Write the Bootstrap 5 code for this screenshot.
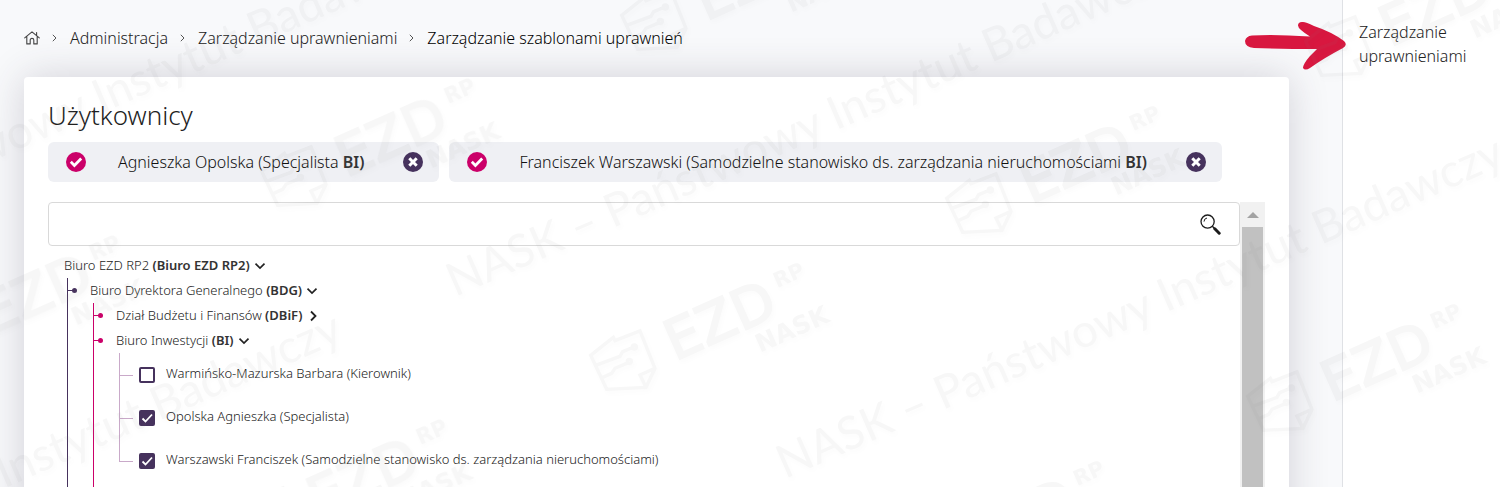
<!DOCTYPE html>
<html lang="pl">
<head>
<meta charset="utf-8">
<meta name="viewport" content="width=device-width, initial-scale=1">
<title>Zarządzanie szablonami uprawnień</title>
<link href="https://cdn.jsdelivr.net/npm/bootstrap@5.3.0/dist/css/bootstrap.min.css" rel="stylesheet">
<style>
  :root { --violet: #46325d; --pink: #cb0069; --lilac: #c9a9c9; }
  body { font-family: "Noto Sans", sans-serif; font-size: 16px; font-weight: 300; line-height: 24px; color: #1f1f1f; background: #f8f9fb; }
  a, a:hover { color: inherit; text-decoration: none; }
  svg { display: block; flex: none; }

  .page-main { padding: 26px 53px 0 24px; min-width: 0; }
  .crumbs { gap: 12px; margin-bottom: 27px; color: #222; }
  .crumbs li { gap: 13px; }
  .crumbs .current { color: #000; }

  .panel { background: #fff; border-radius: 4px; padding: 24px; box-shadow: 0 0 40px rgba(60, 50, 75, .2); }
  .panel-title { font-size: 26px; line-height: 28px; font-weight: 300; margin-bottom: 13px; }

  .person-chips { gap: 10px; margin-bottom: 20px; }
  .person-chip { height: 40px; padding: 0 16px 0 18px; border-radius: 6px; background: #eff0f4; color: #111; }
  .person-chip .who { margin: 0 39px 0 32px; }
  .person-chip b, .tree b { font-weight: 600; color: #333; }
  .bare { border: 0; padding: 0; background: none; color: inherit; }

  .search-box { height: 44px; border: 1px solid #d9d9d9; border-radius: 4px; padding-right: 18px; margin-bottom: 7px; }
  .search-box input { border: 0; background: none; box-shadow: none !important; }

  .scroll-rail { width: 25px; padding: 0 2px; background: #f1f1f1; }
  .rail-up { height: 25px; }
  .rail-thumb { background: #c1c1c1; }

  .tree, .tree ul { list-style: none; margin: 0; padding: 0; }
  .tree { margin-left: 16px; font-size: 13px; color: #222; }
  .tree-row { height: 25px; gap: 4px; }
  .tree-row span { padding-bottom: 2px; }
  .tree .level { margin-left: 3px; padding-bottom: 24px; border-left: 1px solid #46325d; }
  .tree .level .level { border-left-color: #cb0069; }
  .tree .level > li { position: relative; padding-left: 22px; }
  .tree .level > li::before { content: ""; position: absolute; left: 0; top: 12px; width: 6px; height: 1px; background: var(--violet); }
  .tree .level > li::after { content: ""; position: absolute; left: 4px; top: 10px; width: 5px; height: 5px; border-radius: 50%; background: var(--violet); }
  .tree .level .level > li::before, .tree .level .level > li::after { background: var(--pink); }
  .tree .people { margin-left: 3px; }
  .tree .people li { position: relative; height: 43px; padding-left: 20px; }
  .tree .people li::before { content: ""; position: absolute; left: 0; top: 0; width: 14px; height: 23px; border: solid var(--lilac); border-width: 0 0 1px 1px; }
  .tree .people li:not(:last-child)::after { content: ""; position: absolute; left: 0; top: 22px; bottom: 0; border-left: 1px solid var(--lilac); }
  .tree .people label { padding-bottom: 4px; }
  .tree .form-check-input { width: 16px; height: 16px; margin: 0 11px 0 0; border: 2px solid var(--violet); border-radius: 2px; box-shadow: none; flex: none; }
  .tree .form-check-input:checked { background: var(--violet) url("data:image/svg+xml,%3Csvg xmlns='http://www.w3.org/2000/svg' viewBox='0 0 12 12'%3E%3Cpath d='M1.500 6.500 4.500 9.500 11 2.500' fill='none' stroke='%23fff' stroke-width='1.800'/%3E%3C/svg%3E") center / 12px 12px no-repeat; }

  .side-panel { position: relative; width: 158px; padding: 20px 16px; background: #fff; border-left: 1px solid #dfe1e5; }
  .side-panel a { color: #222; }
  .pointer { position: absolute; left: -99px; top: 20px; }

  .watermark { position: absolute; inset: 0; pointer-events: none; user-select: none; }
</style>
</head>
<body>
<div class="position-relative vh-100 overflow-hidden">
  <div class="d-flex h-100">
    <main class="page-main flex-grow-1">
      <nav aria-label="Ścieżka nawigacji">
        <ol class="crumbs d-flex list-unstyled">
          <li class="d-flex align-items-center"><a href="#" aria-label="Strona główna"><svg width="16" height="14" viewBox="0 0 16 14" fill="none" stroke="#444" stroke-width="1.1" stroke-linejoin="round" stroke-linecap="round"><path d="M.7 6.8 8 .8l7.3 6M2.8 5.3v7.6h3.4V9q0-1.6 1.8-1.6T9.8 9v3.9h3.4V5.3M12.6 1.5v2.8"/></svg></a></li>
          <li class="d-flex align-items-center"><svg width="5" height="8" viewBox="0 0 5 8" fill="none" stroke="#555"><path d="m.8.8 3.2 3.2L.8 7.2"/></svg><a href="#">Administracja</a></li>
          <li class="d-flex align-items-center"><svg width="5" height="8" viewBox="0 0 5 8" fill="none" stroke="#555"><path d="m.8.8 3.2 3.2L.8 7.2"/></svg><a href="#">Zarządzanie uprawnieniami</a></li>
          <li class="d-flex align-items-center current" aria-current="page"><svg width="5" height="8" viewBox="0 0 5 8" fill="none" stroke="#555"><path d="m.8.8 3.2 3.2L.8 7.2"/></svg>Zarządzanie szablonami uprawnień</li>
        </ol>
      </nav>

      <section class="panel">
        <h1 class="panel-title">Użytkownicy</h1>
        <div class="person-chips d-flex">
          <div class="person-chip d-flex align-items-center text-nowrap">
            <svg width="20" height="20" viewBox="0 0 20 20"><circle cx="10" cy="10" r="10" fill="#cb0069"/><path d="m4.8 9.8 3.6 3.6 6.8-7" fill="none" stroke="#fff" stroke-width="2.8"/></svg>
            <span class="who">Agnieszka Opolska (Specjalista <b>BI)</b></span>
            <button type="button" class="bare" aria-label="Usuń"><svg width="20" height="20" viewBox="0 0 20 20"><circle cx="10" cy="10" r="10" fill="#46325d"/><path d="m6.300 6.300 7.400 7.400m0-7.400-7.400 7.400" stroke="#fff" stroke-width="3"/></svg></button>
          </div>
          <div class="person-chip d-flex align-items-center text-nowrap">
            <svg width="20" height="20" viewBox="0 0 20 20"><circle cx="10" cy="10" r="10" fill="#cb0069"/><path d="m4.8 9.8 3.6 3.6 6.8-7" fill="none" stroke="#fff" stroke-width="2.8"/></svg>
            <span class="who">Franciszek Warszawski (Samodzielne stanowisko ds. zarządzania nieruchomościami <b>BI)</b></span>
            <button type="button" class="bare" aria-label="Usuń"><svg width="20" height="20" viewBox="0 0 20 20"><circle cx="10" cy="10" r="10" fill="#46325d"/><path d="m6.300 6.300 7.400 7.400m0-7.400-7.400 7.400" stroke="#fff" stroke-width="3"/></svg></button>
          </div>
        </div>

        <div class="d-flex">
          <div class="flex-grow-1">
            <form class="search-box d-flex align-items-center">
              <input type="text" class="form-control" aria-label="Szukaj użytkownika">
              <button type="button" class="bare" aria-label="Szukaj"><svg width="21" height="21" viewBox="0 0 21 21" fill="none" stroke="#1c1c1c"><circle cx="7.6" cy="7.6" r="6.600" stroke-width="1.300"/><path d="M4 7.600A3.700 3.700 0 0 1 7 4" stroke-width="1"/><path d="m12.300 12.300 3 3" stroke-width="1.400"/><path d="m14.800 14.800 4.400 4.400" stroke-width="3" stroke-linecap="round"/></svg></button>
            </form>

            <ul class="tree">
              <li>
                <div class="tree-row d-flex align-items-center"><span>Biuro EZD RP2 <b>(Biuro EZD RP2)</b></span><button type="button" class="bare" aria-label="Zwiń"><svg width="12" height="8" viewBox="0 0 12 8" fill="none" stroke="#222" stroke-width="1.7"><path d="M1.500 1.700 6 6l4.500-4.300"/></svg></button></div>
                <ul class="level">
                  <li>
                    <div class="tree-row d-flex align-items-center"><span>Biuro Dyrektora Generalnego <b>(BDG)</b></span><button type="button" class="bare" aria-label="Zwiń"><svg width="12" height="8" viewBox="0 0 12 8" fill="none" stroke="#222" stroke-width="1.7"><path d="M1.500 1.700 6 6l4.500-4.300"/></svg></button></div>
                    <ul class="level">
                      <li>
                        <div class="tree-row d-flex align-items-center"><span>Dział Budżetu i Finansów <b>(DBiF)</b></span><button type="button" class="bare" aria-label="Rozwiń"><svg width="12" height="12" viewBox="0 0 12 12" fill="none" stroke="#222" stroke-width="1.8"><path d="M4 1.500 8.500 6l-4.500 4.500"/></svg></button></div>
                      </li>
                      <li>
                        <div class="tree-row d-flex align-items-center"><span>Biuro Inwestycji <b>(BI)</b></span><button type="button" class="bare" aria-label="Zwiń"><svg width="12" height="8" viewBox="0 0 12 8" fill="none" stroke="#222" stroke-width="1.7"><path d="M1.500 1.700 6 6l4.500-4.300"/></svg></button></div>
                        <ul class="people">
                          <li class="d-flex align-items-center"><input class="form-check-input" type="checkbox" id="p1"><label for="p1">Warmińsko-Mazurska Barbara (Kierownik)</label></li>
                          <li class="d-flex align-items-center"><input class="form-check-input" type="checkbox" id="p2" checked><label for="p2">Opolska Agnieszka (Specjalista)</label></li>
                          <li class="d-flex align-items-center"><input class="form-check-input" type="checkbox" id="p3" checked><label for="p3">Warszawski Franciszek (Samodzielne stanowisko ds. zarządzania nieruchomościami)</label></li>
                        </ul>
                      </li>
                    </ul>
                  </li>
                </ul>
              </li>
            </ul>
          </div>
          <div class="scroll-rail d-flex flex-column" aria-hidden="true">
            <div class="rail-up d-flex align-items-center justify-content-center"><svg width="12" height="6" viewBox="0 0 12 6"><path d="M0 6 6 0l6 6z" fill="#a3a3a3"/></svg></div>
            <div class="rail-thumb flex-grow-1"></div>
          </div>
        </div>
      </section>
    </main>

    <aside class="side-panel flex-shrink-0">
      <a href="#" class="d-block">Zarządzanie uprawnieniami</a>
      <svg class="pointer" width="104" height="52" viewBox="0 0 104 52" aria-hidden="true"><path d="M8 15.500Q30 14 66 16.500Q54 9 54 5.500Q54 1.500 59 2Q62 2 70 6Q88 12 100 21Q104 25 99 28Q80 38 66 48Q61 51 59 48Q59 44 66 36L73 29Q40 29 10 28Q1 27 1 21Q2 16 8 15.500Z" fill="#d8173f"/></svg>
    </aside>
  </div>

  <svg class="watermark" width="100%" height="100%" aria-hidden="true">
    <defs>
      <filter id="soft" x="-5%" y="-5%" width="110%" height="110%"><feDropShadow dx="2" dy="3" stdDeviation="2" flood-color="#808080" flood-opacity=".4"/></filter>
      <g id="logo">
        <path transform="translate(580 250) scale(.3333)" fill="none" stroke="#808080" stroke-width="10" d="M32 316 100 262l5 10 75-29 45 112-27 57-118 6zM225 355l-45 20 18 37M45 347l75-28 8-14 34-14M64 384l31-14 10-15 40-17M157 291a6 6 0 1 0 12 0a6 6 0 1 0-12 0M142 334a6 6 0 1 0 12 0a6 6 0 1 0-12 0"/>
        <g transform="translate(675 361) rotate(-24)" fill="#808080" font-family="DejaVu Sans">
          <text font-size="55" font-weight="400" stroke="#808080" stroke-width="2">EZD</text>
          <text x="123" y="-25" font-size="21" font-weight="700">RP</text>
          <text x="81" y="27" font-size="25" font-weight="700">NASK</text>
        </g>
      </g>
      <text id="owner" font-family="Lato" font-size="46" font-weight="400" fill="#808080" transform="rotate(-23.6)">NASK – Państwowy Instytut Badawczy</text>
    </defs>
    <g opacity=".065" filter="url(#soft)">
      <use href="#owner" x="-280" y="280"/>
      <use href="#owner" x="455" y="297"/>
      <use href="#owner" x="785" y="479"/>
      <use href="#owner" x="-377" y="655"/>
      <use href="#logo"/>
      <use href="#logo" x="-329" y="-184"/>
      <use href="#logo" x="356" y="-157"/>
      <use href="#logo" x="31" y="-340"/>
      <use href="#logo" x="715" y="-314"/>
      <use href="#logo" x="657" y="41"/>
      <use href="#logo" x="300" y="198"/>
      <use href="#logo" x="-357" y="157"/>
      <use href="#logo" x="-684" y="-27"/>
    </g>
  </svg>
</div>
<script src="https://cdn.jsdelivr.net/npm/bootstrap@5.3.0/dist/js/bootstrap.bundle.min.js"></script>
</body>
</html>
